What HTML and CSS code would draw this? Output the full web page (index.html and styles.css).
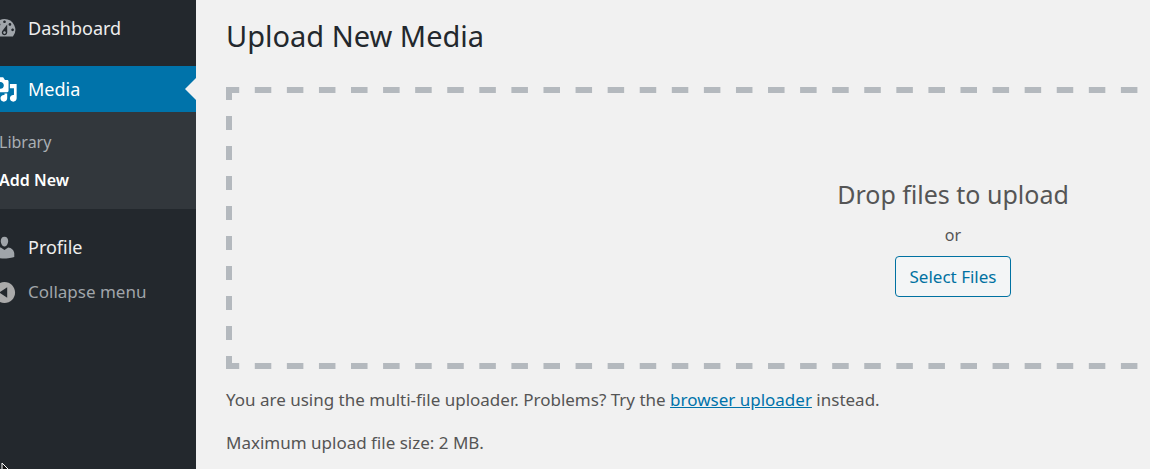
FILE: index.html
```html
<!DOCTYPE html>
<html lang="en">
<head>
<meta charset="utf-8">
<title>Upload New Media</title>
<link rel="stylesheet" href="styles.css">
</head>
<body>
<div class="shell">
  <nav class="sidebar" aria-label="Main menu">
    <a class="item" href="#">
      <svg class="icon" viewBox="0 0 20 20" aria-hidden="true"><path d="M3.76 16h12.48A7.998 7.998 0 0 0 10 3a7.998 7.998 0 0 0-6.24 13zM10 4c.55 0 1 .45 1 1s-.45 1-1 1-1-.45-1-1 .45-1 1-1zM6 6c.55 0 1 .45 1 1s-.45 1-1 1-1-.45-1-1 .45-1 1-1zm8 0c.55 0 1 .45 1 1s-.45 1-1 1-1-.45-1-1 .45-1 1-1zm-5.37 5.55L12 7v6c0 1.1-.9 2-2 2s-2-.9-2-2c0-.57.24-1.08.63-1.45zM4 10c.55 0 1 .45 1 1s-.45 1-1 1-1-.45-1-1 .45-1 1-1zm12 0c.55 0 1 .45 1 1s-.45 1-1 1-1-.45-1-1 .45-1 1-1zm-5 3c0-.55-.45-1-1-1s-1 .45-1 1 .45 1 1 1 1-.45 1-1z" fill-rule="evenodd"/></svg>
      <span>Dashboard</span>
    </a>
    <div class="group">
      <a class="item current" href="#">
        <svg class="icon" viewBox="0 0 20 20" aria-hidden="true"><path d="M13 11V4c0-.55-.45-1-1-1h-1.67L9 1H5L3.67 3H2c-.55 0-1 .45-1 1v7c0 .55.45 1 1 1h10c.55 0 1-.45 1-1zM7 4.5c1.38 0 2.5 1.12 2.5 2.5S8.38 9.5 7 9.5 4.5 8.38 4.5 7 5.62 4.5 7 4.5zM14 6h5v10.5c0 1.38-1.12 2.5-2.5 2.5S14 17.88 14 16.5s1.12-2.5 2.5-2.5c.17 0 .34.02.5.05V9h-3V6zm-4 8.05V13h2v3.5c0 1.38-1.12 2.5-2.5 2.5S7 17.88 7 16.5 8.12 14 9.5 14c.17 0 .34.02.5.05z" fill-rule="evenodd"/></svg>
        <span>Media</span>
      </a>
      <div class="submenu">
        <a class="subitem" href="#">Library</a>
        <a class="subitem active" href="#">Add New</a>
      </div>
    </div>
    <a class="item" href="#">
      <svg class="icon" viewBox="0 0 20 20" aria-hidden="true"><path d="M10 9.25c-2.27 0-2.73-3.44-2.73-3.44C7 4.02 7.82 2 9.97 2c2.16 0 2.98 2.02 2.71 3.81 0 0-.41 3.44-2.68 3.44zm0 2.57L12.72 10c2.39 0 4.52 2.33 4.52 4.53v2.49s-3.65 1.13-7.24 1.13c-3.65 0-7.24-1.13-7.24-1.13v-2.49c0-2.25 1.94-4.48 4.47-4.48z"/></svg>
      <span>Profile</span>
    </a>
    <button class="item collapse" type="button">
      <svg class="icon" viewBox="0 0 20 20" aria-hidden="true"><path d="M10 2.16c4.33 0 7.84 3.51 7.84 7.84s-3.51 7.84-7.84 7.84S2.16 14.33 2.16 10 5.67 2.16 10 2.16zm2 11.72V6.12L6.18 9.97z" fill-rule="evenodd"/></svg>
      <span>Collapse menu</span>
    </button>
  </nav>
  <main class="main">
    <h1 class="title">Upload New Media</h1>
    <section class="dropzone">
      <p class="drop-title">Drop files to upload</p>
      <p class="drop-or">or</p>
      <button class="select" type="button">Select Files</button>
    </section>
    <p class="note">You are using the multi-file uploader. Problems? Try the <a class="link" href="#">browser uploader</a> instead.</p>
    <p class="note">Maximum upload file size: 2 MB.</p>
  </main>
</div>
<svg class="pointer" viewBox="0 0 12 18" aria-hidden="true"><path d="M1 1v14l3.5-3 2.5 5 2-1-2.5-5H11z"/></svg>
</body>
</html>
```

FILE: styles.css
```css
* {
  box-sizing: border-box;
}

body {
  margin: 0;
  overflow: hidden;
  background: #f1f1f1;
  color: #555;
  font-family: "Noto Sans", "Open Sans", sans-serif;
  font-size: 16px;
  line-height: 24px;
}

p,
h1 {
  margin: 0;
}

/* The admin screen is wider than the window and scrolled slightly right. */
.shell {
  display: flex;
  min-width: 1727px;
  min-height: 100vh;
  margin-left: -17px;
}

.sidebar {
  flex: none;
  width: 213px;
  padding-top: 5px;
  background: #23282d;
}

.item {
  display: flex;
  align-items: center;
  gap: 10px;
  width: 100%;
  height: 46px;
  padding: 0 8px;
  border: 0;
  background: none;
  color: #eee;
  font: inherit;
  font-size: 18px;
  text-decoration: none;
}

.icon {
  flex: none;
  width: 27px;
  height: 27px;
  fill: #a0a5aa;
}

.group {
  margin: 15px 0;
}

.current {
  position: relative;
  background: #0073aa;
  color: #fff;
}

.current .icon {
  fill: #fff;
}

.current::after {
  content: "";
  position: absolute;
  top: 12px;
  right: 0;
  border: 11px solid transparent;
  border-left-width: 0;
  border-right-color: #f1f1f1;
}

.submenu {
  padding: 11px 0 10px;
  background: #32373c;
}

.subitem {
  display: block;
  padding: 7px 16px;
  color: #a9aeb3;
  text-decoration: none;
}

.subitem.active {
  color: #fff;
  font-weight: 600;
}

.collapse {
  height: 44px;
  color: #a0a5aa;
  font-size: 17px;
}

.collapse .icon {
  fill: #aaa;
}

.main {
  flex: 1;
  padding: 16px 30px;
}

.title {
  margin-bottom: 31px;
  color: #23282d;
  font-size: 29px;
  font-weight: 400;
  line-height: 40px;
}

/* Dashed frame: each tile carries one centred dash; the tiles are rounded
   to fit the content box so that the corners meet. */
.dropzone {
  --dash-x: linear-gradient(90deg, transparent 25%, #b4b9be 25% 75%, transparent 75%);
  --dash-y: linear-gradient(transparent 27%, #b4b9be 27% 73%, transparent 73%);
  display: flex;
  flex-direction: column;
  align-items: center;
  justify-content: center;
  min-height: 282px;
  margin-bottom: 19px;
  padding: 21px;
  background-image: var(--dash-x), var(--dash-x), var(--dash-y), var(--dash-y);
  background-origin: content-box;
  background-position: 0 -21px, 0 calc(100% + 21px), -21px 0, calc(100% + 21px) 0;
  background-repeat: round no-repeat, round no-repeat, no-repeat round, no-repeat round;
  background-size: 32px 6px, 32px 6px, 6px 30px, 6px 30px;
}

.drop-title {
  margin-top: 15px;
  font-size: 25px;
  line-height: 40px;
}

.drop-or {
  margin: 9px 0;
}

.select {
  height: 41px;
  padding: 0 14px;
  border: 1px solid #0071a1;
  border-radius: 4px;
  background: #f3f5f6;
  color: #0071a1;
  font: inherit;
  font-size: 17px;
}

.note {
  margin-bottom: 19px;
  font-size: 17px;
}

.link {
  color: #0073aa;
}

.pointer {
  position: fixed;
  bottom: -11px;
  left: 1px;
  width: 12px;
  height: 18px;
  fill: #111;
  stroke: #fff;
}
```
